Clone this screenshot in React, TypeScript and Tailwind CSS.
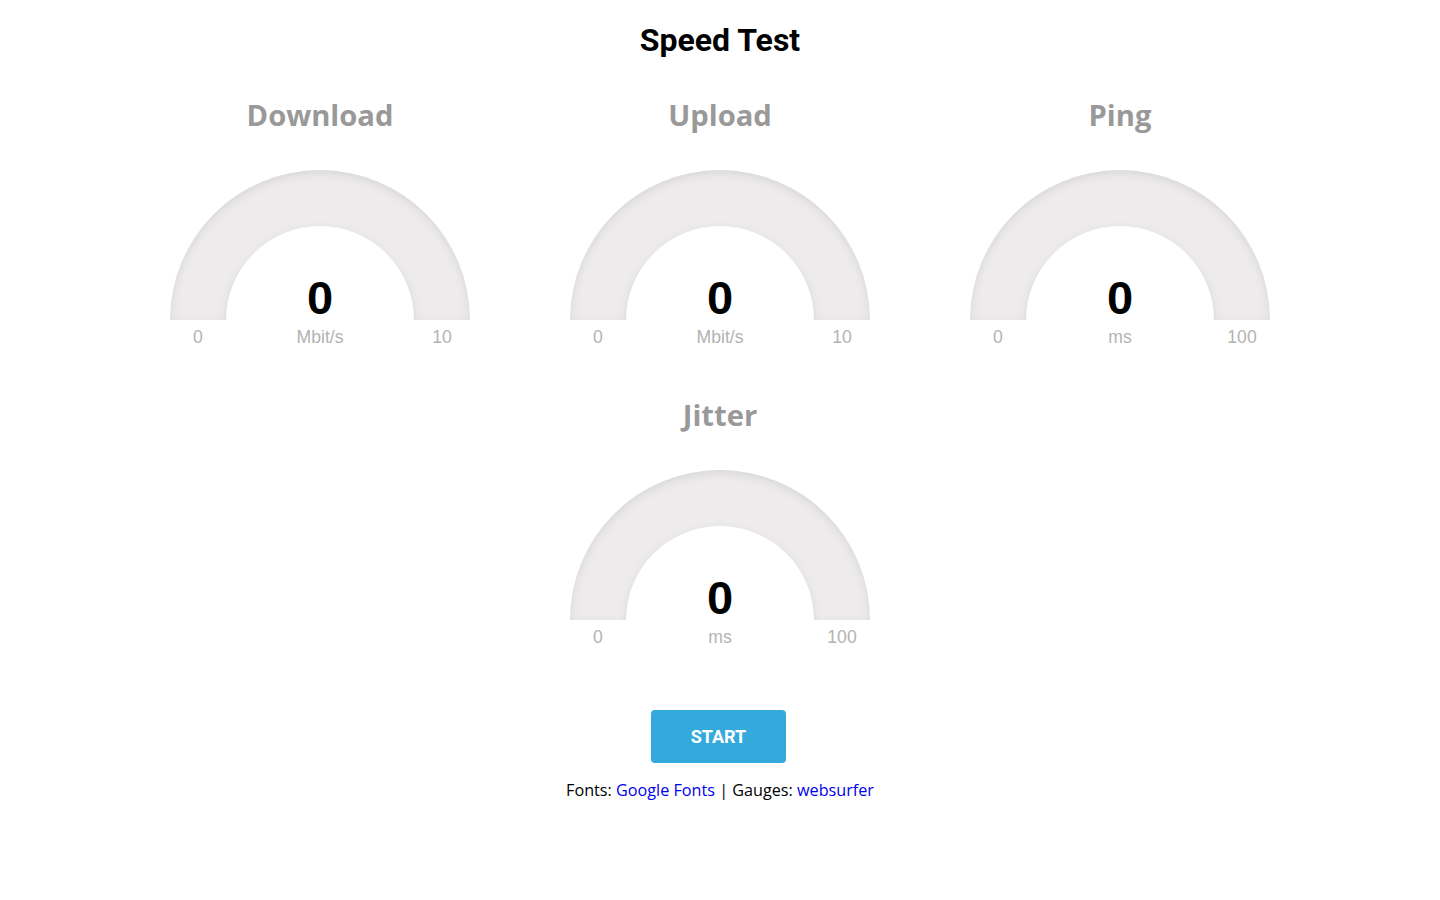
import React from "react";

type G = { title: string; unit: string; max: string };

function Gauge({ title, unit, max, id }: G & { id: string }) {
  return (
    <div className="flex flex-col items-center h-[300px]">
      <h2
        className="text-[29.2px] leading-[38px] font-bold text-[#999999]"
        style={{ fontFamily: '"Open Sans", sans-serif' }}
      >
        {title}
      </h2>
      <svg width="400" height="200" viewBox="0 0 400 200" className="mt-[16px] block">
        <defs>
          <filter id={id} x="-10%" y="-10%" width="120%" height="120%">
            <feOffset dx="0" dy="3" />
            <feGaussianBlur result="offset-blur" stdDeviation="5" />
            <feComposite operator="out" in="SourceGraphic" in2="offset-blur" result="inverse" />
            <feFlood floodColor="black" floodOpacity="0.2" result="color" />
            <feComposite operator="in" in="color" in2="inverse" result="shadow" />
            <feComposite operator="over" in="shadow" in2="SourceGraphic" />
          </filter>
        </defs>
        <path
          d="M 50 170 A 150 150 0 0 1 350 170 L 294 170 A 94 94 0 0 0 106 170 Z"
          fill="#edebeb"
          filter={`url(#${id})`}
        />
        <text
          x="200"
          y="164"
          textAnchor="middle"
          fill="#010101"
          fontSize="47"
          fontWeight="bold"
          fontFamily='"Liberation Sans", Arial, sans-serif'
        >
          0
        </text>
        <g fill="#b3b3b3" fontSize="17.6" fontFamily='"Liberation Sans", Arial, sans-serif' textAnchor="middle">
          <text x="78" y="193">0</text>
          <text x="200" y="193">{unit}</text>
          <text x="322" y="193">{max}</text>
        </g>
      </svg>
    </div>
  );
}

export default function App() {
  return (
    <div className="min-h-[900px] bg-white flex flex-col items-center">
      <h1
        className="mt-[21px] text-[32px] leading-[38px] font-bold text-black"
        style={{ fontFamily: 'Roboto, sans-serif' }}
      >
        Speed Test
      </h1>
      <div className="mt-[37px] w-[1200px] grid grid-cols-3">
        <Gauge id="g1" title="Download" unit="Mbit/s" max="10" />
        <Gauge id="g2" title="Upload" unit="Mbit/s" max="10" />
        <Gauge id="g3" title="Ping" unit="ms" max="100" />
        <div />
        <Gauge id="g4" title="Jitter" unit="ms" max="100" />
        <div />
      </div>
      <button
        className="mt-[14px] mr-[3px] w-[135px] h-[53px] rounded-[4px] bg-[#33a9dc] text-white text-[18px] font-bold"
        style={{ fontFamily: 'Roboto, sans-serif' }}
      >
        START
      </button>
      <p
        className="mt-[15px] text-[16.2px] leading-[24px] text-black"
        style={{ fontFamily: '"Open Sans", sans-serif' }}
      >
        Fonts: <a className="text-[#0000ee]">Google Fonts</a> | Gauges:{" "}
        <a className="text-[#0000ee]">websurfer</a>
      </p>
    </div>
  );
}
